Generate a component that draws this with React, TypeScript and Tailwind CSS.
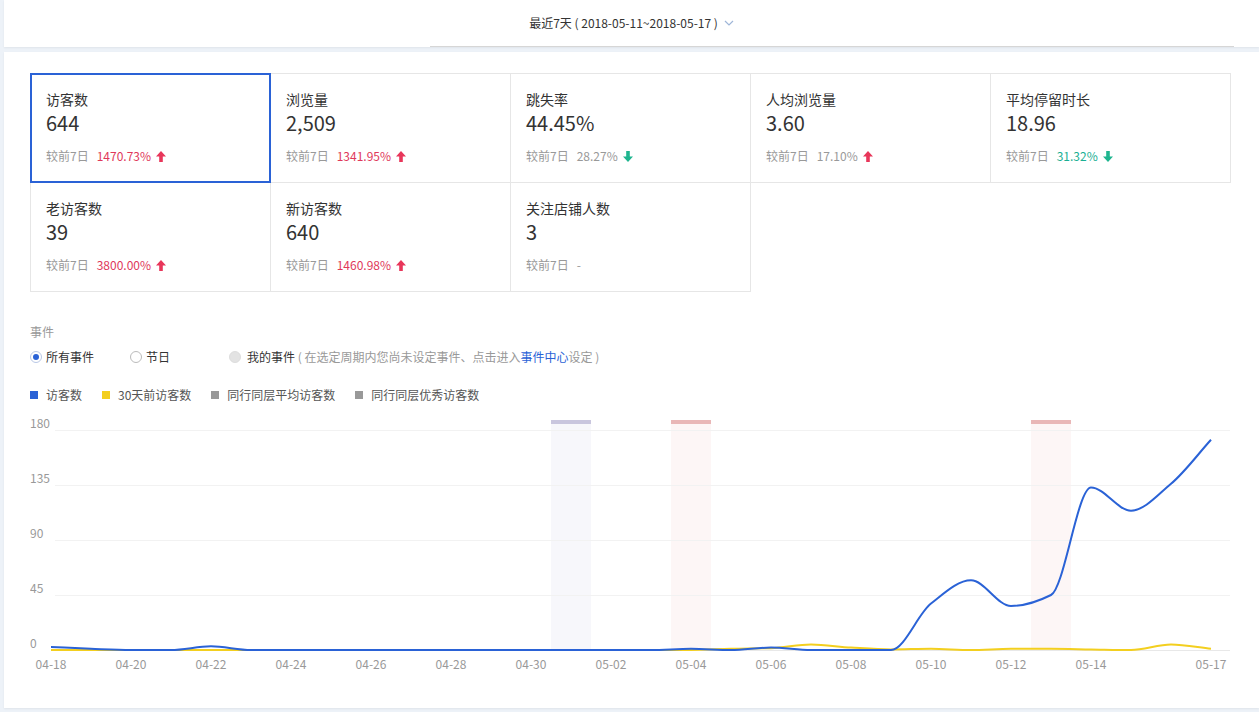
import React from "react";

const FONT = "font-[family-name:Noto_Sans_CJK_SC,Liberation_Sans,sans-serif]";

type Metric = {
  label: string;
  value: string;
  change: string;
  trend: "up" | "down" | "none";
  muted?: boolean;
  active?: boolean;
};

const metrics: Metric[] = [
  { label: "访客数", value: "644", change: "1470.73%", trend: "up", active: true },
  { label: "浏览量", value: "2,509", change: "1341.95%", trend: "up" },
  { label: "跳失率", value: "44.45%", change: "28.27%", trend: "down", muted: true },
  { label: "人均浏览量", value: "3.60", change: "17.10%", trend: "up", muted: true },
  { label: "平均停留时长", value: "18.96", change: "31.32%", trend: "down" },
  { label: "老访客数", value: "39", change: "3800.00%", trend: "up" },
  { label: "新访客数", value: "640", change: "1460.98%", trend: "up" },
  { label: "关注店铺人数", value: "3", change: "-", trend: "none" },
];

// 04-18 ... 05-17
const visitors = [
  2.5, 1, 0, 0, 3, 0, 0, 0, 0, 0, 0, 0, 0, 0, 0, 0, 1, 0, 2, 0, 0, 0, 38, 57, 36, 45, 133, 114, 136, 172,
];
const lastMonth = [
  0, 0, 0, 0, 0, 0, 0, 0, 0, 0, 0, 0, 0, 0, 0, 0, 0, 1, 1.5, 4.5, 2, 0.5, 1, 0, 1, 1, 0.5, 0, 4.5, 1,
];

const xOf = (i: number) => 51 + i * 40;
const yOf = (v: number) => 649 - (v * 55) / 45;

// monotone cubic interpolation, so the line never overshoots past a point
function smoothPath(data: number[]) {
  const xs = data.map((_, i) => xOf(i));
  const ys = data.map((v) => yOf(v));
  const n = data.length;
  const d: number[] = [];
  for (let i = 0; i < n - 1; i++) d.push((ys[i + 1] - ys[i]) / (xs[i + 1] - xs[i]));
  const m: number[] = new Array(n).fill(0);
  m[0] = d[0];
  m[n - 1] = d[n - 2];
  for (let i = 1; i < n - 1; i++) {
    if (d[i - 1] * d[i] <= 0) m[i] = 0;
    else m[i] = (2 * d[i - 1] * d[i]) / (d[i - 1] + d[i]);
  }
  let p = `M${xs[0]},${ys[0]}`;
  for (let i = 0; i < n - 1; i++) {
    const h = (xs[i + 1] - xs[i]) / 3;
    p += ` C${xs[i] + h},${ys[i] + m[i] * h} ${xs[i + 1] - h},${ys[i + 1] - m[i + 1] * h} ${xs[i + 1]},${ys[i + 1]}`;
  }
  return p;
}

function Arrow({ dir }: { dir: "up" | "down" }) {
  return (
    <svg width="10" height="11" viewBox="0 0 10 11" className="ml-[5px]">
      {dir === "up" ? (
        <path d="M5 0 L10 5.5 L6.8 5.5 L6.8 11 L3.2 11 L3.2 5.5 L0 5.5 Z" fill="#e8365a" />
      ) : (
        <path d="M5 11 L10 5.5 L6.8 5.5 L6.8 0 L3.2 0 L3.2 5.5 L0 5.5 Z" fill="#1fb58f" />
      )}
    </svg>
  );
}

function MetricCell({ m }: { m: Metric }) {
  const color = m.muted || m.trend === "none"
    ? "text-[#999]"
    : m.trend === "up"
    ? "text-[#e0385a]"
    : "text-[#1aaf93]";
  return (
    <div className="relative w-[240px] h-[109px] border-r border-b border-[#e6e6e6] pl-[15px] pt-[15px]">
      {m.active && (
        <span className="absolute -left-px -top-px -right-px -bottom-px border-2 border-[#2a62d6]" />
      )}
      <div className="text-[14px] leading-[20px] text-[#333]">{m.label}</div>
      <div className="text-[20px] leading-[28px] text-[#333]">{m.value}</div>
      <div className="mt-[11px] flex items-center text-[12px] leading-[16px]">
        <span className="text-[#999]">较前7日</span>
        <span className={`ml-[8px] ${color}`}>{m.change}</span>
        {m.trend !== "none" && <Arrow dir={m.trend} />}
      </div>
    </div>
  );
}

function Radio({ state }: { state: "on" | "off" | "disabled" }) {
  if (state === "disabled")
    return <span className="w-[12px] h-[12px] rounded-full bg-[#e3e3e3] border border-[#ddd]" />;
  return (
    <span
      className={`w-[12px] h-[12px] rounded-full border flex items-center justify-center ${
        state === "on" ? "border-[#b9c8e6]" : "border-[#bbb]"
      }`}
    >
      {state === "on" && <span className="w-[6px] h-[6px] rounded-full bg-[#2a62d6]" />}
    </span>
  );
}

function LegendItem({ color, label }: { color: string; label: string }) {
  return (
    <div className="flex items-center mr-[20px]">
      <span className={`w-[8px] h-[8px] ${color}`} />
      <span className="ml-[8px] text-[12px] leading-[16px] text-[#555]">{label}</span>
    </div>
  );
}

const bands = [
  { i: 13, bar: "#c9c6de", fill: "#f7f7fb" },
  { i: 16, bar: "#e9b7b7", fill: "#fdf6f6" },
  { i: 25, bar: "#e9b7b7", fill: "#fdf6f6" },
];

function Chart() {
  const yTicks = [180, 135, 90, 45, 0];
  const xLabels = ["04-18", "04-20", "04-22", "04-24", "04-26", "04-28", "04-30", "05-02", "05-04", "05-06", "05-08", "05-10", "05-12", "05-14"];
  return (
    <svg width="1200" height="278" viewBox="30 402 1200 278" className="block">
      {bands.map((b) => (
        <g key={b.i}>
          <rect x={xOf(b.i) - 20} y={423} width={40} height={226} fill={b.fill} />
          <rect x={xOf(b.i) - 20} y={419} width={40} height={4} fill={b.bar} />
        </g>
      ))}
      {yTicks.map((v) => (
        <g key={v}>
          <line x1={55} x2={1230} y1={yOf(v) + 0.5} y2={yOf(v) + 0.5} stroke={v === 0 ? "#e8e8e8" : "#f2f2f2"} />
          <text x={30} y={yOf(v) - 2} fontSize="12" fill="#999">
            {v}
          </text>
        </g>
      ))}
      {xLabels.map((l, k) => (
        <text key={l} x={xOf(k * 2)} y={668} fontSize="12" fill="#999" textAnchor="middle">
          {l}
        </text>
      ))}
      <text x={xOf(29)} y={668} fontSize="12" fill="#999" textAnchor="middle">
        05-17
      </text>
      <path d={smoothPath(lastMonth)} fill="none" stroke="#f3cf1f" strokeWidth="2" />
      <path d={smoothPath(visitors)} fill="none" stroke="#2a62d6" strokeWidth="2" />
    </svg>
  );
}

export default function App() {
  return (
    <div className={`w-[1259px] h-[712px] overflow-hidden bg-[#edf2f8] pl-[4px] ${FONT}`}>
      {/* Date range header */}
      <div className="h-[47px] bg-white flex flex-col shadow-[0_1px_2px_rgba(0,0,0,0.06)]">
        <div className="flex-1 flex items-center justify-center text-[12px] text-[#333]">
          <span>最近7天 (&nbsp;2018-05-11~2018-05-17&nbsp;)</span>
          <svg width="10" height="6" viewBox="0 0 10 6" className="ml-[6px]">
            <path d="M1 1 L5 5 L9 1" fill="none" stroke="#9fb6d8" strokeWidth="1.2" />
          </svg>
        </div>
        <div className="ml-[426px] mr-[25px] h-px bg-[#d6d6d6]" />
      </div>

      {/* Main panel */}
      <div className="mt-[5px] h-[656px] bg-white pl-[26px] pt-[21px] shadow-[0_1px_2px_rgba(0,0,0,0.06)]">
        <div className="w-[1201px] flex flex-wrap border-l border-t border-[#e6e6e6]">
          {metrics.map((m) => (
            <MetricCell key={m.label} m={m} />
          ))}
        </div>

        <div className="mt-[32px] text-[12px] leading-[16px] text-[#999]">事件</div>
        <div className="mt-[9px] flex items-center text-[12px] leading-[16px]">
          <label className="w-[100px] flex items-center gap-[4px] text-[#333]">
            <Radio state="on" />
            所有事件
          </label>
          <label className="w-[99px] flex items-center gap-[4px] text-[#333]">
            <Radio state="off" />
            节日
          </label>
          <label className="flex items-center gap-[6px]">
            <Radio state="disabled" />
            <span className="text-[#333]">
              我的事件
              <span className="text-[#999]">
                &nbsp;(&nbsp;在选定周期内您尚未设定事件、点击进入<span className="text-[#2a62d6]">事件中心</span>设定&nbsp;)
              </span>
            </span>
          </label>
        </div>

        <div className="mt-[22px] flex items-center">
          <LegendItem color="bg-[#2a62d6]" label="访客数" />
          <LegendItem color="bg-[#f3cf1f]" label="30天前访客数" />
          <LegendItem color="bg-[#999]" label="同行同层平均访客数" />
          <LegendItem color="bg-[#999]" label="同行同层优秀访客数" />
        </div>

        <Chart />
      </div>
    </div>
  );
}
